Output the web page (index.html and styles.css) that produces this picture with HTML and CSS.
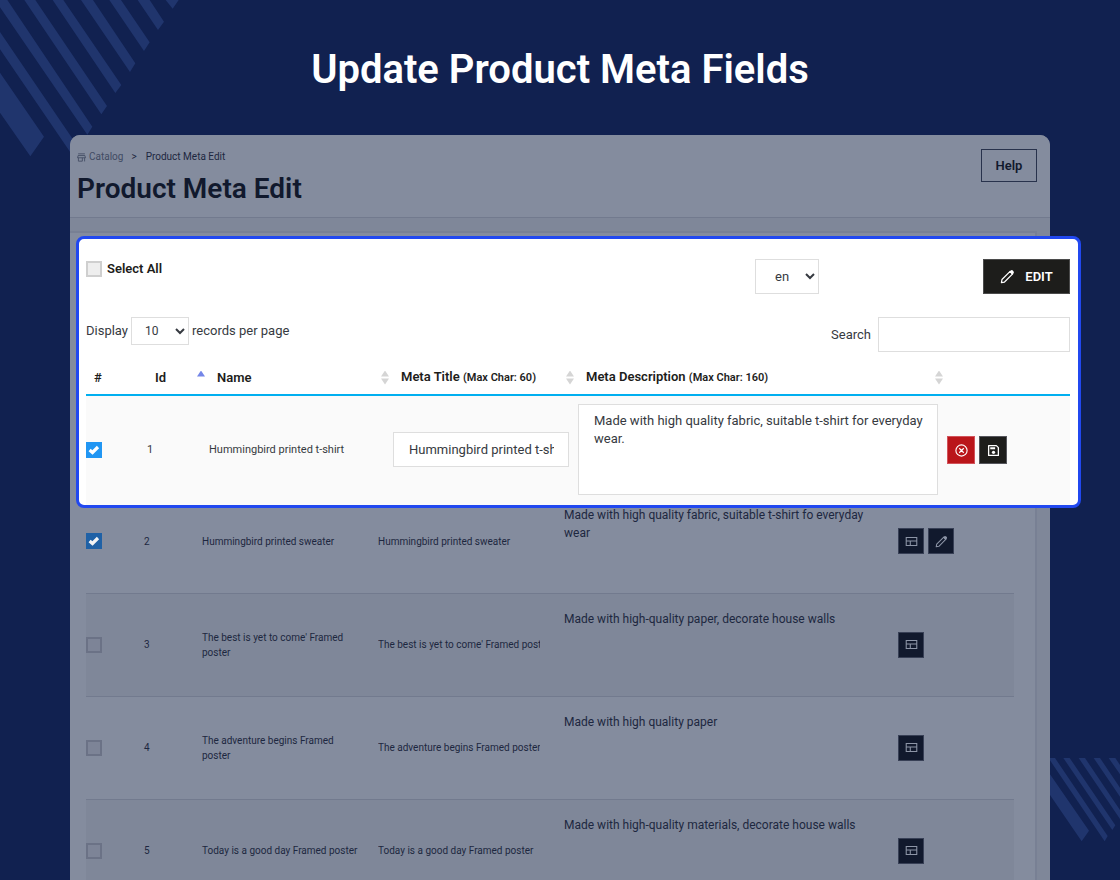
FILE: index.html
```html
<!DOCTYPE html>
<html lang="en">
<head>
  <meta charset="UTF-8" />
  <meta name="viewport" content="width=device-width, initial-scale=1" />
  <title>Update Product Meta Fields</title>
  <link rel="stylesheet" href="styles.css">
</head>
<body>
  <svg class="stripes stripes-top" viewBox="0 0 540 470" aria-hidden="true">
    <path d="M0 218L132 410L91 469L0 338zM0 96L234 440L217 466L0 148zM-15 0H22L277 380L262 404zM73 0H106L321 318L304 343zM158 0H190L364 255L346 279zM243 0H279L406 190L390 216zM328 0H363L449 127L432 153zM413 0H449L492 65L474 90zM497 0H536L518 26z"/>
  </svg>
  <svg class="stripes stripes-bottom" viewBox="570 534 210 252" aria-hidden="true">
    <path d="M570 583L687 752L665 784L570 645zM570 534H585L743 768L734 784L570 541zM610 534H629L766 736L757 750zM656 534H675L780 690V717zM701 534H720L780 623V650zM746 534H766L780 555V583z"/>
  </svg>

  <!-- icons -->
  <svg class="sprite" aria-hidden="true">
    <symbol id="i-store" viewBox="0 0 16 16"><path d="M2 1.500h12M2 4.500h12l1 4H1zM2.500 8.500v6h7v-6M13.500 8.500v6.500" fill="none" stroke="currentColor" stroke-width="1.500"/></symbol>
    <symbol id="i-pencil" viewBox="0 0 16 16"><path d="M1.500 14.500l.6-3.300L10.800 2.500l2.700 2.700-8.700 8.700z" fill="none" stroke="currentColor" stroke-width="1.300" stroke-linejoin="round"/><path d="M10 3l1.500-1.500q1.200-.8 2.200.2l.6.600q1 1 .2 2.200L13 6z" fill="currentColor"/></symbol>
    <symbol id="i-cancel" viewBox="0 0 16 16"><path d="M14.900 8A6.900 6.900 0 1 1 1.100 8a6.900 6.900 0 0 1 13.800 0zM5.200 5.200l5.600 5.600M10.800 5.200l-5.600 5.600" fill="none" stroke="currentColor" stroke-width="1.400"/></symbol>
    <symbol id="i-save" viewBox="0 0 16 16"><path d="M2 2h9.500l2.500 2.500V14H2z" fill="none" stroke="currentColor" stroke-width="1.600" stroke-linejoin="round"/><path d="M4 4h6v2.500H4z" fill="currentColor"/><circle cx="8" cy="10.300" r="2" fill="currentColor"/></symbol>
    <symbol id="i-grid" viewBox="0 0 16 16"><path d="M1.500 3h13v10h-13zM1.500 7.500h13M6.500 7.500V13" fill="none" stroke="currentColor" stroke-width="1.300"/></symbol>
  </svg>

  <h1 class="headline">Update Product Meta Fields</h1>

  <main class="panel">
    <header class="panel-head">
      <div>
        <nav class="breadcrumb">
          <a href="#"><svg class="icon-store"><use href="#i-store"/></svg>Catalog</a>
          <span class="sep">&gt;</span>
          <span>Product Meta Edit</span>
        </nav>
        <h2>Product Meta Edit</h2>
      </div>
      <button class="btn-help" type="button">Help</button>
    </header>

    <div class="panel-body">
      <section class="highlight">
        <div class="toolbar">
          <label class="select-all"><input type="checkbox"> Select All</label>
          <select class="lang" aria-label="Language"><option>en</option></select>
          <button class="btn-edit" type="button"><svg><use href="#i-pencil"/></svg>EDIT</button>
        </div>

        <div class="filters">
          <div class="length">
            <label for="length">Display</label>
            <select id="length"><option>10</option></select>
            <span>records per page</span>
          </div>
          <div class="search">
            <label for="search">Search</label>
            <input type="text" id="search">
          </div>
        </div>

        <table class="edit-table">
          <colgroup><col class="c-check"><col class="c-id"><col class="c-name"><col class="c-title"><col><col class="c-actions"></colgroup>
          <thead>
            <tr>
              <th>#</th>
              <th><div class="sort asc">Id</div></th>
              <th><div class="sort">Name</div></th>
              <th><div class="sort"><span>Meta Title <small>(Max Char: 60)</small></span></div></th>
              <th><div class="sort"><span>Meta Description <small>(Max Char: 160)</small></span></div></th>
              <th></th>
            </tr>
          </thead>
          <tbody>
            <tr>
              <td><input type="checkbox" aria-label="Select product 1" checked></td>
              <td>1</td>
              <td>Hummingbird printed t-shirt</td>
              <td><input type="text" aria-label="Meta title" value="Hummingbird printed t-shirt"></td>
              <td><textarea aria-label="Meta description">Made with high quality fabric, suitable t-shirt for everyday wear.</textarea></td>
              <td>
                <div class="actions">
                  <button class="btn-icon cancel" type="button" aria-label="Cancel"><svg><use href="#i-cancel"/></svg></button>
                  <button class="btn-icon" type="button" aria-label="Save"><svg><use href="#i-save"/></svg></button>
                </div>
              </td>
            </tr>
          </tbody>
        </table>
      </section>

      <table class="list-table">
        <colgroup><col class="c-check"><col class="c-id"><col class="c-name"><col class="c-title"><col><col class="c-actions"></colgroup>
        <tbody>
          <tr>
            <td><input type="checkbox" aria-label="Select product 2" checked></td>
            <td>2</td>
            <td>Hummingbird printed sweater</td>
            <td><div class="meta-title">Hummingbird printed sweater</div></td>
            <td class="desc">Made with high quality fabric, suitable t-shirt fo everyday wear</td>
            <td>
              <div class="actions">
                <button class="btn-icon" type="button" aria-label="Preview"><svg><use href="#i-grid"/></svg></button>
                <button class="btn-icon" type="button" aria-label="Edit"><svg><use href="#i-pencil"/></svg></button>
              </div>
            </td>
          </tr>
          <tr>
            <td><input type="checkbox" aria-label="Select product 3"></td>
            <td>3</td>
            <td>The best is yet to come' Framed poster</td>
            <td><div class="meta-title">The best is yet to come' Framed poster</div></td>
            <td class="desc">Made with high-quality paper, decorate house walls</td>
            <td><div class="actions"><button class="btn-icon" type="button" aria-label="Preview"><svg><use href="#i-grid"/></svg></button></div></td>
          </tr>
          <tr>
            <td><input type="checkbox" aria-label="Select product 4"></td>
            <td>4</td>
            <td>The adventure begins Framed poster</td>
            <td><div class="meta-title">The adventure begins Framed poster</div></td>
            <td class="desc">Made with high quality paper</td>
            <td><div class="actions"><button class="btn-icon" type="button" aria-label="Preview"><svg><use href="#i-grid"/></svg></button></div></td>
          </tr>
          <tr>
            <td><input type="checkbox" aria-label="Select product 5"></td>
            <td>5</td>
            <td>Today is a good day Framed poster</td>
            <td><div class="meta-title">Today is a good day Framed poster</div></td>
            <td class="desc">Made with high-quality materials, decorate house walls</td>
            <td><div class="actions"><button class="btn-icon" type="button" aria-label="Preview"><svg><use href="#i-grid"/></svg></button></div></td>
          </tr>
        </tbody>
      </table>
    </div>
  </main>
</body>
</html>
```
FILE: styles.css
```css
* {
  box-sizing: border-box;
}

body {
  position: relative;
  height: 100vh;
  margin: 0;
  overflow: hidden;
  background: #112150;
  color: #363a41;
  font-family: Roboto, sans-serif;
  font-size: 13px;
  line-height: 18px;
}

button, input, select, textarea {
  font: inherit;
  color: inherit;
}

/* background stripes */
.stripes {
  position: absolute;
  fill: #20356d;
}

.stripes-top {
  top: 0;
  left: 0;
  width: 180px;
}

.stripes-bottom {
  right: 0;
  bottom: 38px;
  width: 70px;
}

.sprite {
  position: absolute;
  width: 0;
  height: 0;
}

.headline {
  margin: 0;
  padding: 46px 0 41px;
  color: #fff;
  font-size: 40px;
  font-weight: 600;
  line-height: 48px;
  text-align: center;
}

.panel {
  position: relative;
  margin: 0 70px;
  border-radius: 10px 10px 0 0;
  background: #7f8799;
  color: #1d2740;
}

.panel-head {
  display: flex;
  justify-content: space-between;
  align-items: flex-start;
  height: 83px;
  padding: 14px 13px 0 7px;
  border-bottom: 1px solid #727a8e;
  border-radius: 10px 10px 0 0;
  background: #848c9e;
}

.breadcrumb {
  display: flex;
  align-items: center;
  height: 16px;
  font-size: 10px;
}

.breadcrumb a {
  display: flex;
  align-items: center;
  gap: 3px;
  color: #414b63;
  text-decoration: none;
}

.breadcrumb .sep {
  margin: 0 9px 0 8px;
}

.icon-store {
  width: 9px;
  height: 9px;
}

.panel-head h2 {
  margin: 8px 0 0;
  color: #11192d;
  font-size: 28px;
  font-weight: 600;
  line-height: 32px;
}

.btn-help {
  width: 56px;
  height: 33px;
  padding: 0;
  border: 1px solid #28324c;
  background: transparent;
  color: #11192d;
  font-weight: 600;
}

.panel-body {
  margin-top: 13px;
  margin-right: 13px;
  padding-top: 3px;
  border-top: 2px solid #788094;
  border-right: 2px solid #788094;
  background: #848c9e;
}

/* active area */
.highlight {
  position: relative;
  z-index: 1;
  margin: 0 -46px -18px 6px;
  padding: 20px 8px 0 7px;
  border: 3px solid #2148f0;
  border-radius: 8px;
  background: #fff;
  color: #363a41;
}

.toolbar {
  display: flex;
  align-items: flex-start;
}

.select-all {
  display: flex;
  align-items: center;
  gap: 5px;
  flex: 1;
  height: 20px;
  color: #1d1d1b;
  font-weight: 600;
}

input[type="checkbox"] {
  appearance: none;
  display: block;
  width: 16px;
  height: 16px;
  margin: 0;
  border: 2px solid #cfcfcf;
  background: #eee;
}

input[type="checkbox"]:checked {
  border: 0;
  background: #2196f3 url("data:image/svg+xml,%3Csvg xmlns='http://www.w3.org/2000/svg' viewBox='0 0 16 16'%3E%3Cpath d='M3.600 8l2.900 2.500L12 5' fill='none' stroke='%23fff' stroke-width='3.200'/%3E%3C/svg%3E");
}

select,
input[type="text"],
textarea {
  border: 1px solid #dedede;
  border-radius: 0;
  background: #fff;
}

.lang {
  width: 64px;
  height: 35px;
  margin-right: 164px;
  padding-left: 15px;
}

.btn-edit {
  display: flex;
  align-items: center;
  justify-content: center;
  gap: 10px;
  width: 87px;
  height: 35px;
  padding: 0;
  border: 1px solid #4b4b4b;
  background: #1d1d1b;
  color: #fff;
  font-weight: 600;
}

.btn-edit svg {
  width: 15px;
  height: 15px;
}

.filters {
  display: flex;
  justify-content: space-between;
  align-items: flex-start;
  margin-top: 23px;
}

.length {
  display: flex;
  align-items: center;
  gap: 3px;
}

.length select {
  width: 58px;
  height: 28px;
  padding-left: 9px;
  font-size: 12px;
}

.search {
  display: flex;
  align-items: center;
  gap: 7px;
}

.search input {
  width: 192px;
  height: 35px;
}

table {
  table-layout: fixed;
  border-collapse: collapse;
}

th, td {
  padding: 0;
  text-align: left;
}

td {
  font-size: 11px;
  line-height: 15px;
}

.edit-table {
  width: 100%;
  margin-top: 7px;
}

.edit-table .c-check { width: 61px; }
.edit-table .c-id { width: 62px; }
.edit-table .c-name { width: 184px; }
.edit-table .c-title { width: 185px; }
.edit-table .c-actions { width: 123px; }

th {
  height: 36px;
  padding: 2px 4px 0 8px;
  border-bottom: 2px solid #00aff0;
  color: #1d1d1b;
  font-weight: 600;
}

th small {
  font-size: 11px;
}

.sort {
  display: flex;
  align-items: center;
  justify-content: space-between;
}

.sort::after {
  content: "";
  width: 8px;
  height: 14px;
  background: #d5d5d5;
  clip-path: polygon(50% 0, 100% 43%, 0 43%, 0 57%, 100% 57%, 50% 100%, 0 57%, 0 43%);
}

.sort.asc::after {
  background: #7486e8;
  clip-path: polygon(50% 0, 100% 43%, 0 43%);
}

.edit-table td {
  height: 110px;
  padding-bottom: 2px;
  background: #fafafa;
}

.edit-table td input[type="text"] {
  display: block;
  width: 176px;
  height: 35px;
  padding: 0 14px 0 15px;
  font-size: 13px;
}

textarea {
  display: block;
  width: calc(100% - 9px);
  height: 91px;
  padding: 7px 4px 7px 15px;
  font-size: 13px;
  line-height: 18px;
  resize: none;
}

.actions {
  display: flex;
  gap: 4px;
}

.btn-icon {
  display: flex;
  align-items: center;
  justify-content: center;
  width: 28px;
  height: 28px;
  padding: 2px 0 0;
  border: 1px solid #55565c;
  background: #1d1d1b;
  color: #fff;
}

.btn-icon.cancel {
  border-color: #d2525a;
  background: #ba151a;
}

.btn-icon svg {
  width: 13px;
  height: 13px;
}

/* dimmed rows */
.list-table {
  width: calc(100% - 37px);
  margin-left: 16px;
}

.list-table .c-check { width: 58px; }
.list-table .c-id { width: 58px; }
.list-table .c-name { width: 176px; }
.list-table .c-title { width: 186px; }
.list-table .c-actions { width: 116px; }

.list-table tr {
  height: 103px;
  border-bottom: 1px solid #727a8e;
}

.list-table tr:nth-child(even) {
  background: #7f8799;
}

.list-table td {
  font-size: 10px;
}

.list-table td:nth-child(3) {
  padding-right: 15px;
}

.list-table .desc {
  padding: 16px 20px 0 0;
  font-size: 12px;
  line-height: 18px;
  vertical-align: top;
}

.meta-title {
  width: 162px;
  overflow: hidden;
  white-space: nowrap;
}

.list-table input[type="checkbox"] {
  border-color: #6b7286;
  background-color: #7d8497;
}

.list-table input[type="checkbox"]:checked {
  background-color: #155da7;
  opacity: 0.9;
}

.list-table .btn-icon {
  width: 26px;
  height: 26px;
  padding: 0;
  border-color: #384056;
  background: #11192d;
  color: #8d95a7;
}
```
